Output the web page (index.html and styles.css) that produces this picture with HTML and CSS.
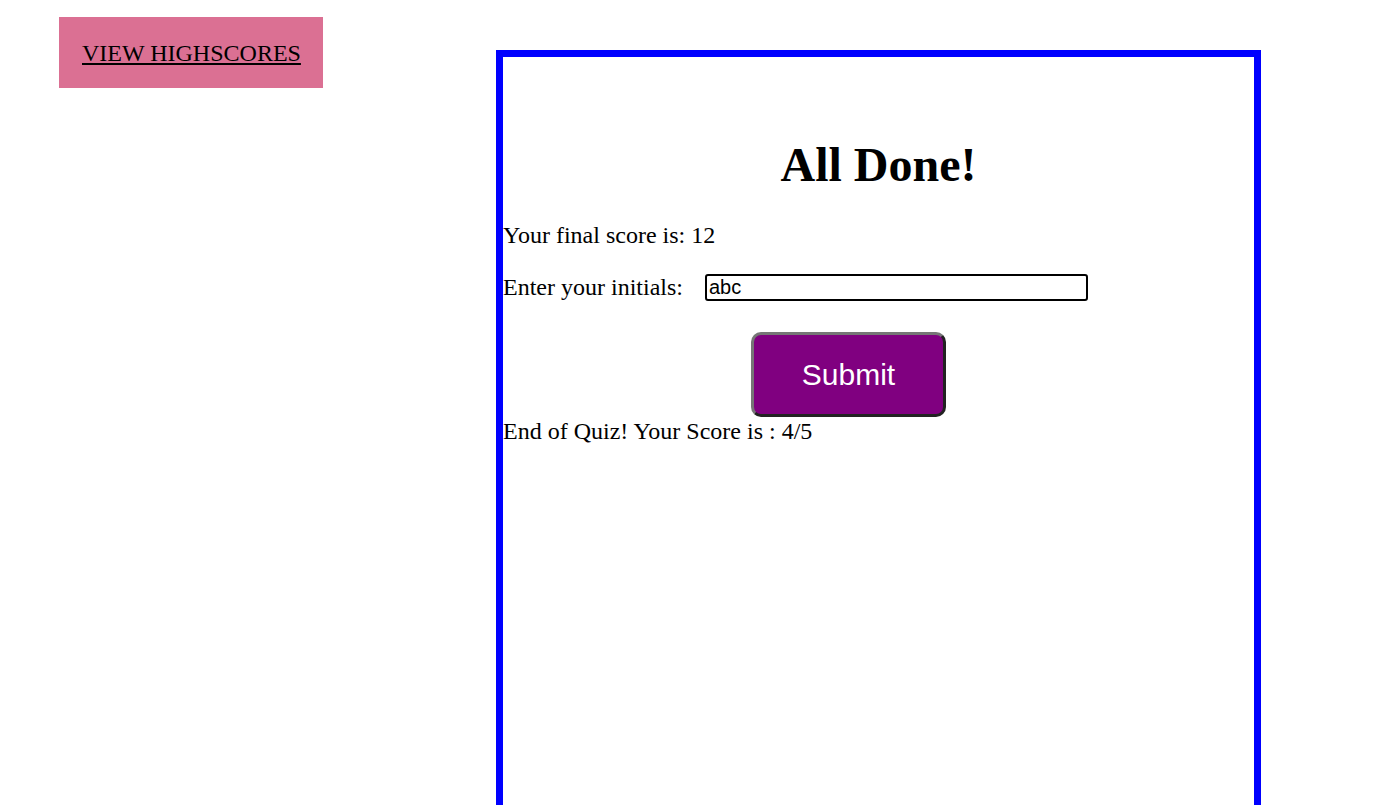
FILE: index.html
```html
<!DOCTYPE html>
<html lang="en">
<head>
<meta charset="utf-8">
<title>Quiz</title>
<link rel="stylesheet" href="styles.css">
</head>
<body>
<div class="page">
  <header class="nav">
    <a class="highscores" href="#">VIEW HIGHSCORES</a>
  </header>
  <main class="quiz">
    <h1 class="title">All Done!</h1>
    <p class="line">Your final score is: 12</p>
    <form class="form">
      <div class="field">
        <label class="label" for="initials">Enter your initials:</label>
        <input class="input" id="initials" type="text" value="abc" spellcheck="true">
      </div>
      <div class="actions">
        <button class="submit" type="button">Submit</button>
      </div>
    </form>
    <p class="line">End of Quiz! Your Score is : 4/5</p>
  </main>
</div>
</body>
</html>
```

FILE: styles.css
```css
html, body {
  margin: 0;
  padding: 0;
  background: #ffffff;
}

body {
  margin: 8px;
  font-family: "Liberation Serif", "Times New Roman", serif;
  color: #000;
  overflow: hidden;
}

.page {
  display: flex;
  align-items: flex-start;
}

.nav {
  margin: 9px 0 0 51px;
  background: #db7093;
  padding: 23px 23px 21px;
  font-size: 24px;
  line-height: 27px;
  width: 218px;
}

.highscores {
  color: #000;
  text-decoration: underline;
  white-space: nowrap;
}

.quiz {
  margin: 42px 0 0 173px;
  border: 7px solid #0000ff;
  width: 751px;
  min-height: 800px;
  box-sizing: content-box;
}

.title {
  margin: 80px 0 0;
  text-align: center;
  font-size: 48px;
  line-height: 55px;
  font-weight: bold;
}

.line {
  margin: 0;
  font-size: 24px;
  line-height: 28px;
}

.quiz > .line:first-of-type {
  margin-top: 29px;
}

.form {
  margin-top: 24px;
}

.field {
  display: flex;
  align-items: center;
}

.label {
  font-size: 24px;
  line-height: 28px;
}

.input {
  margin-left: 22px;
  width: 383px;
  height: 27px;
  box-sizing: border-box;
  border: 2px solid #000;
  border-radius: 3px;
  padding: 0 2px;
  font-family: "Liberation Sans", Arial, sans-serif;
  font-size: 20px;
  color: #000;
  outline: none;
}

.actions {
  display: flex;
  margin-top: 31px;
  padding-left: 248px;
}

.submit {
  width: 195px;
  height: 85px;
  box-sizing: border-box;
  background: #800080;
  color: #fff;
  font-family: "Liberation Sans", Arial, sans-serif;
  font-size: 30px;
  border: 3px solid;
  border-color: #767676 #222 #222 #767676;
  border-radius: 10px;
  padding: 0;
}
```
